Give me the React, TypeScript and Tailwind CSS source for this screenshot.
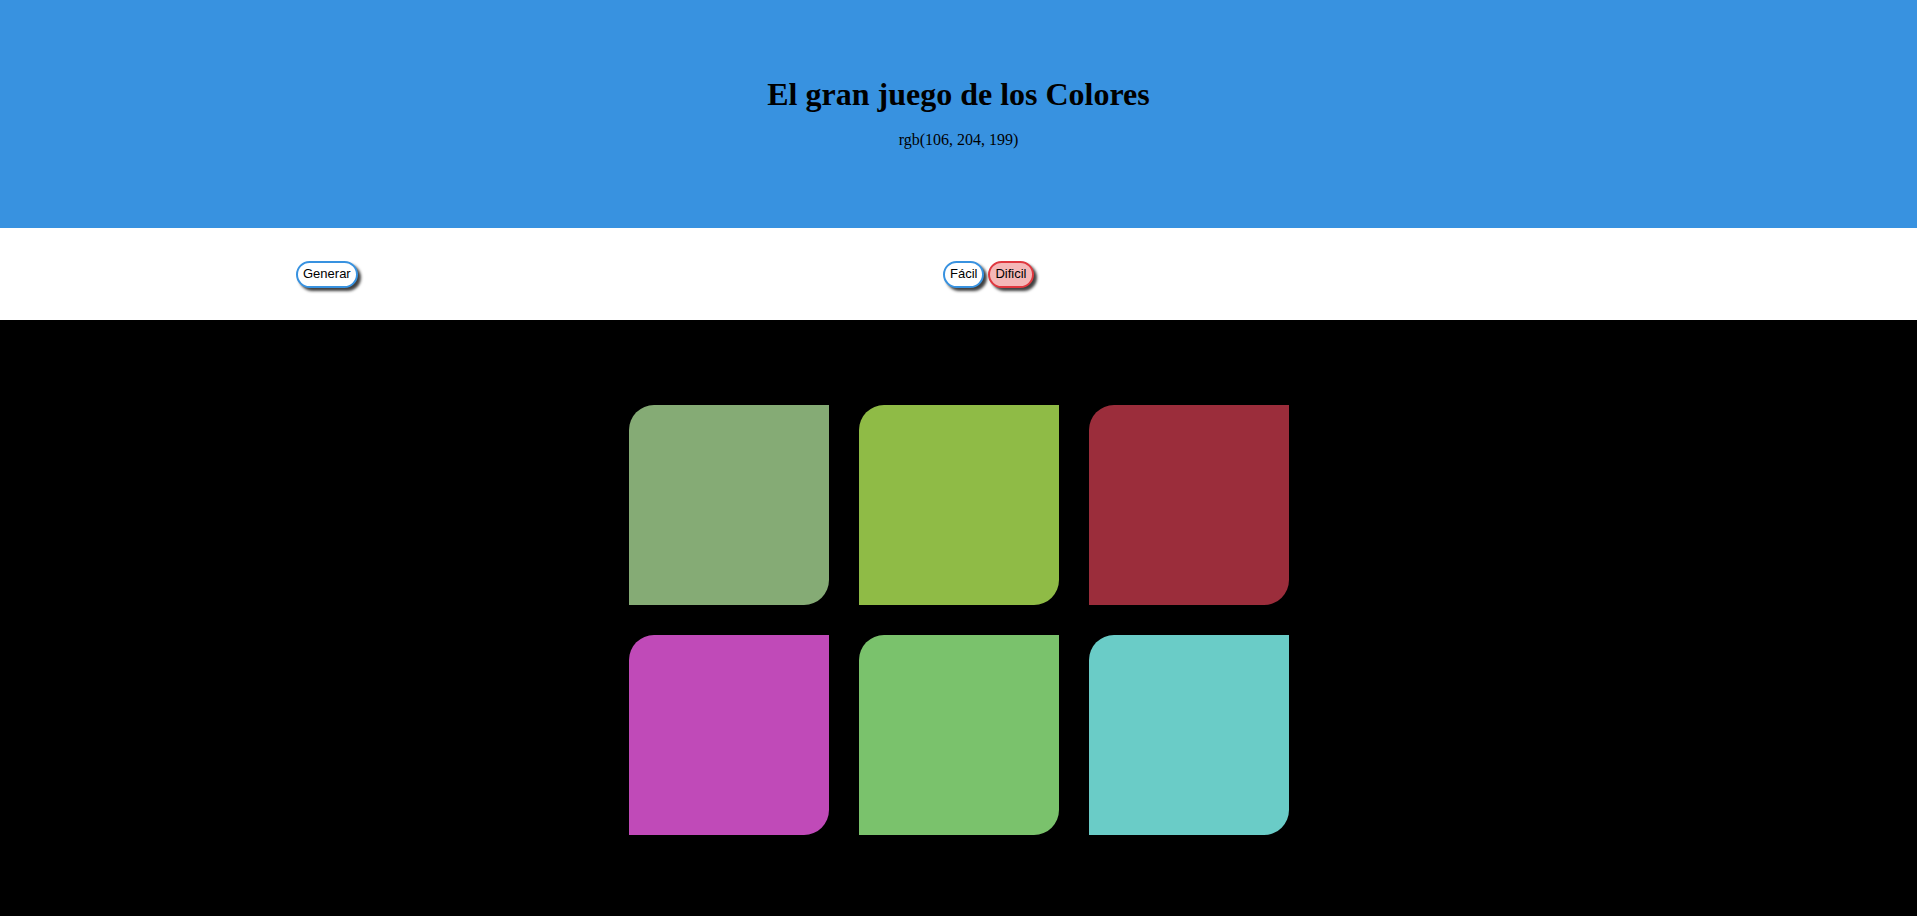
import { useState } from "react"

// Colores de los cuadros
const colores = [
  "rgb(133, 171, 117)",
  "rgb(143, 187, 70)",
  "rgb(155, 45, 59)",
  "rgb(192, 74, 184)",
  "rgb(122, 194, 108)",
  "rgb(106, 204, 199)",
]

const btn =
  "h-[27px] px-[5px] rounded-full border-2 text-[13px] text-black shadow-[3px_3px_3px_rgba(0,0,0,0.75)] font-['Liberation_Sans',Arial,sans-serif]"

export default function App() {
  const [modo, setModo] = useState<"facil" | "dificil">("dificil")

  return (
    <div className="h-[916px] overflow-hidden flex flex-col bg-black font-['Liberation_Serif','Times_New_Roman',serif]">
      {/* Cabecera */}
      <header className="h-[228px] shrink-0 bg-[#3892e0] flex flex-col items-center pt-[75px]">
        <h1 className="text-[32px] font-bold leading-[38px] text-black">El gran juego de los Colores</h1>
        <p className="mt-[18px] text-[16px] leading-[18px] text-black">rgb(106, 204, 199)</p>
      </header>

      {/* Barra de controles */}
      <nav className="h-[92px] shrink-0 bg-white flex items-center">
        <div className="w-[943px] pl-[296px]">
          <button className={`${btn} border-[#3892e0] bg-white`}>Generar</button>
        </div>
        <div className="flex gap-[4px]">
          <button
            onClick={() => setModo("facil")}
            className={`${btn} ${modo === "facil" ? "border-[#e0383f] bg-[#f4b8b8]" : "border-[#3892e0] bg-white"}`}
          >
            Fácil
          </button>
          <button
            onClick={() => setModo("dificil")}
            className={`${btn} ${modo === "dificil" ? "border-[#e0383f] bg-[#f4b8b8]" : "border-[#3892e0] bg-white"}`}
          >
            Dificil
          </button>
        </div>
      </nav>

      {/* Cuadros */}
      <main className="flex-1 bg-black flex justify-center pt-[85px]">
        <div className="grid grid-cols-[200px_200px_200px] gap-[30px] h-fit">
          {colores.map((c) => (
            <div
              key={c}
              className="w-[200px] h-[200px] rounded-tl-[25px] rounded-br-[25px]"
              style={{ backgroundColor: c }}
            />
          ))}
        </div>
      </main>
    </div>
  )
}
